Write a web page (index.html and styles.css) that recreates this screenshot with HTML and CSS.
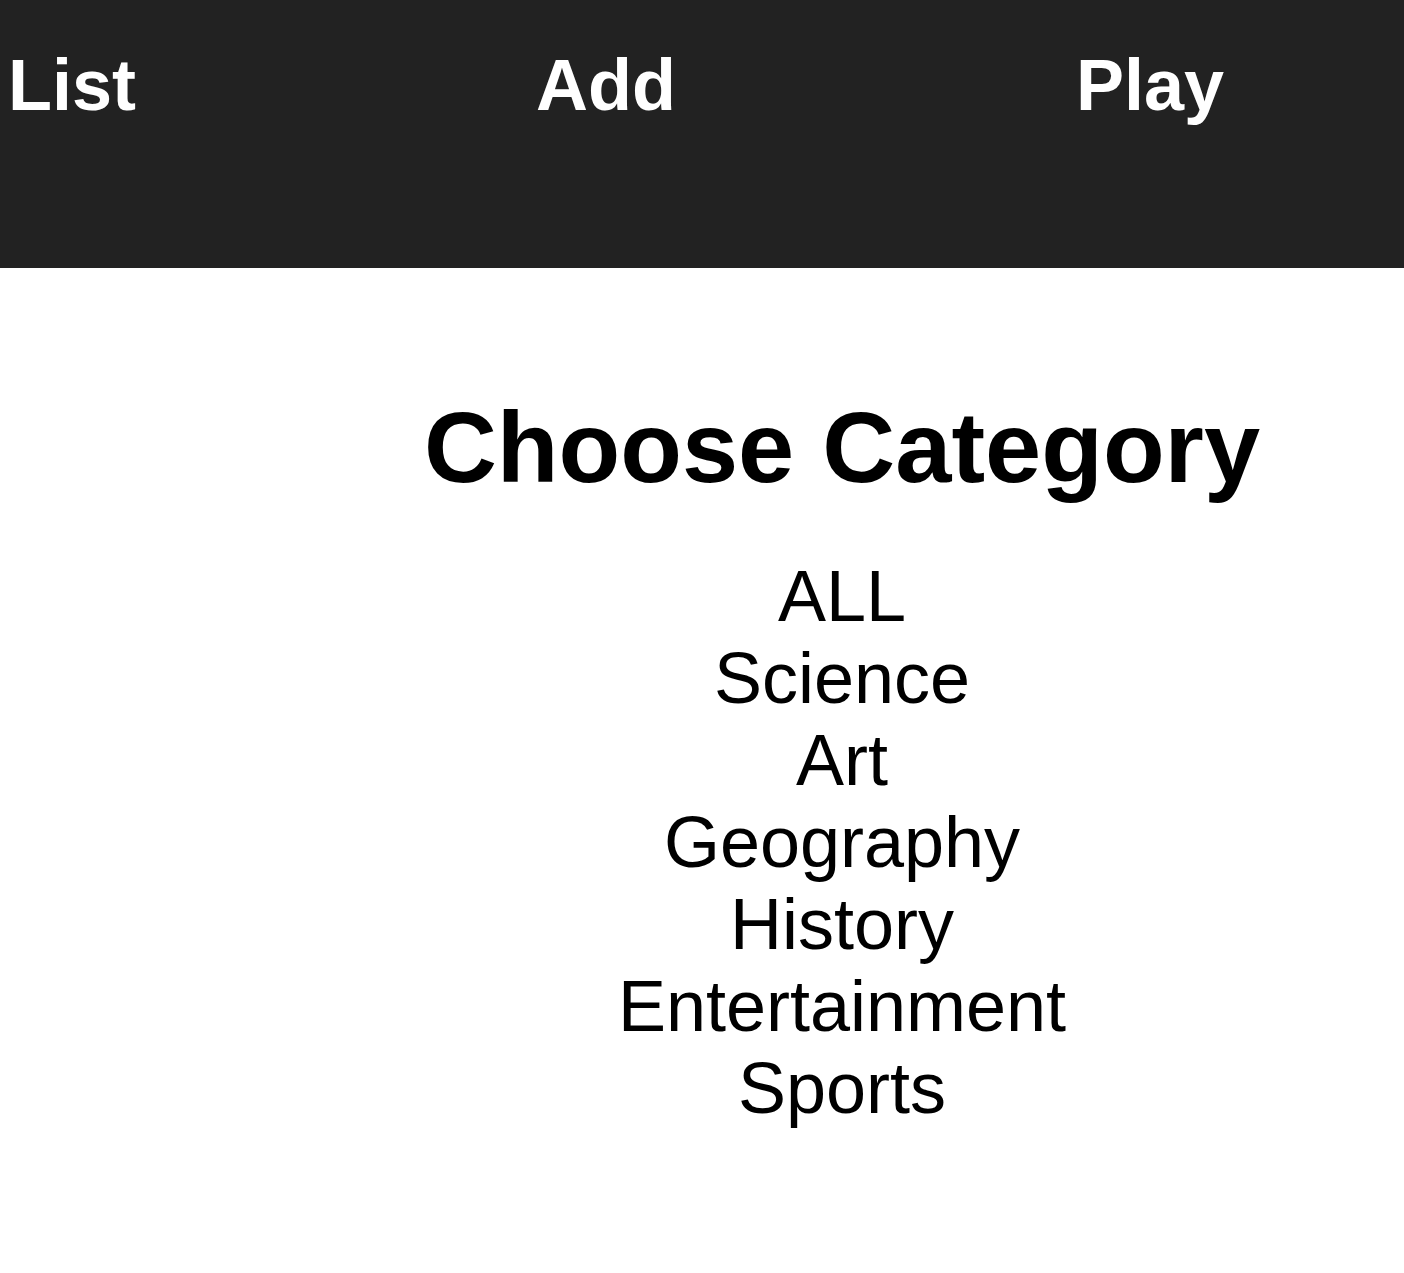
FILE: index.html
```html
<!DOCTYPE html>
<html lang="en">
<head>
<meta charset="utf-8">
<title>Quiz</title>
<link rel="stylesheet" href="styles.css">
</head>
<body>
<header class="topbar">
  <nav class="nav">
    <a class="nav-link" href="#">List</a>
    <a class="nav-link" href="#">Add</a>
    <a class="nav-link" href="#">Play</a>
  </nav>
</header>
<main class="main">
  <section class="chooser">
    <h1 class="chooser-title">Choose Category</h1>
    <ul class="categories">
      <li class="category">ALL</li>
      <li class="category">Science</li>
      <li class="category">Art</li>
      <li class="category">Geography</li>
      <li class="category">History</li>
      <li class="category">Entertainment</li>
      <li class="category">Sports</li>
    </ul>
  </section>
</main>
</body>
</html>
```
FILE: styles.css
```css
html, body {
  margin: 0;
  padding: 0;
  background: #ffffff;
  font-family: "Liberation Sans", Arial, sans-serif;
}

.topbar {
  background: #222222;
  height: 268px;
  box-sizing: border-box;
  padding: 44px 8px 0;
}

.nav {
  display: flex;
  gap: 400px;
}

.nav-link {
  color: #ffffff;
  text-decoration: none;
  font-weight: bold;
  font-size: 72px;
  line-height: 83px;
}

.main {
  padding-left: 280px;
}

.chooser {
  text-align: center;
  padding-top: 121px;
}

.chooser-title {
  margin: 0;
  font-size: 101px;
  font-weight: bold;
  line-height: 116px;
  color: #000000;
}

.categories {
  list-style: none;
  margin: 50px 0 0;
  padding: 0;
}

.category {
  font-size: 72px;
  line-height: 82px;
  color: #000000;
}
```
